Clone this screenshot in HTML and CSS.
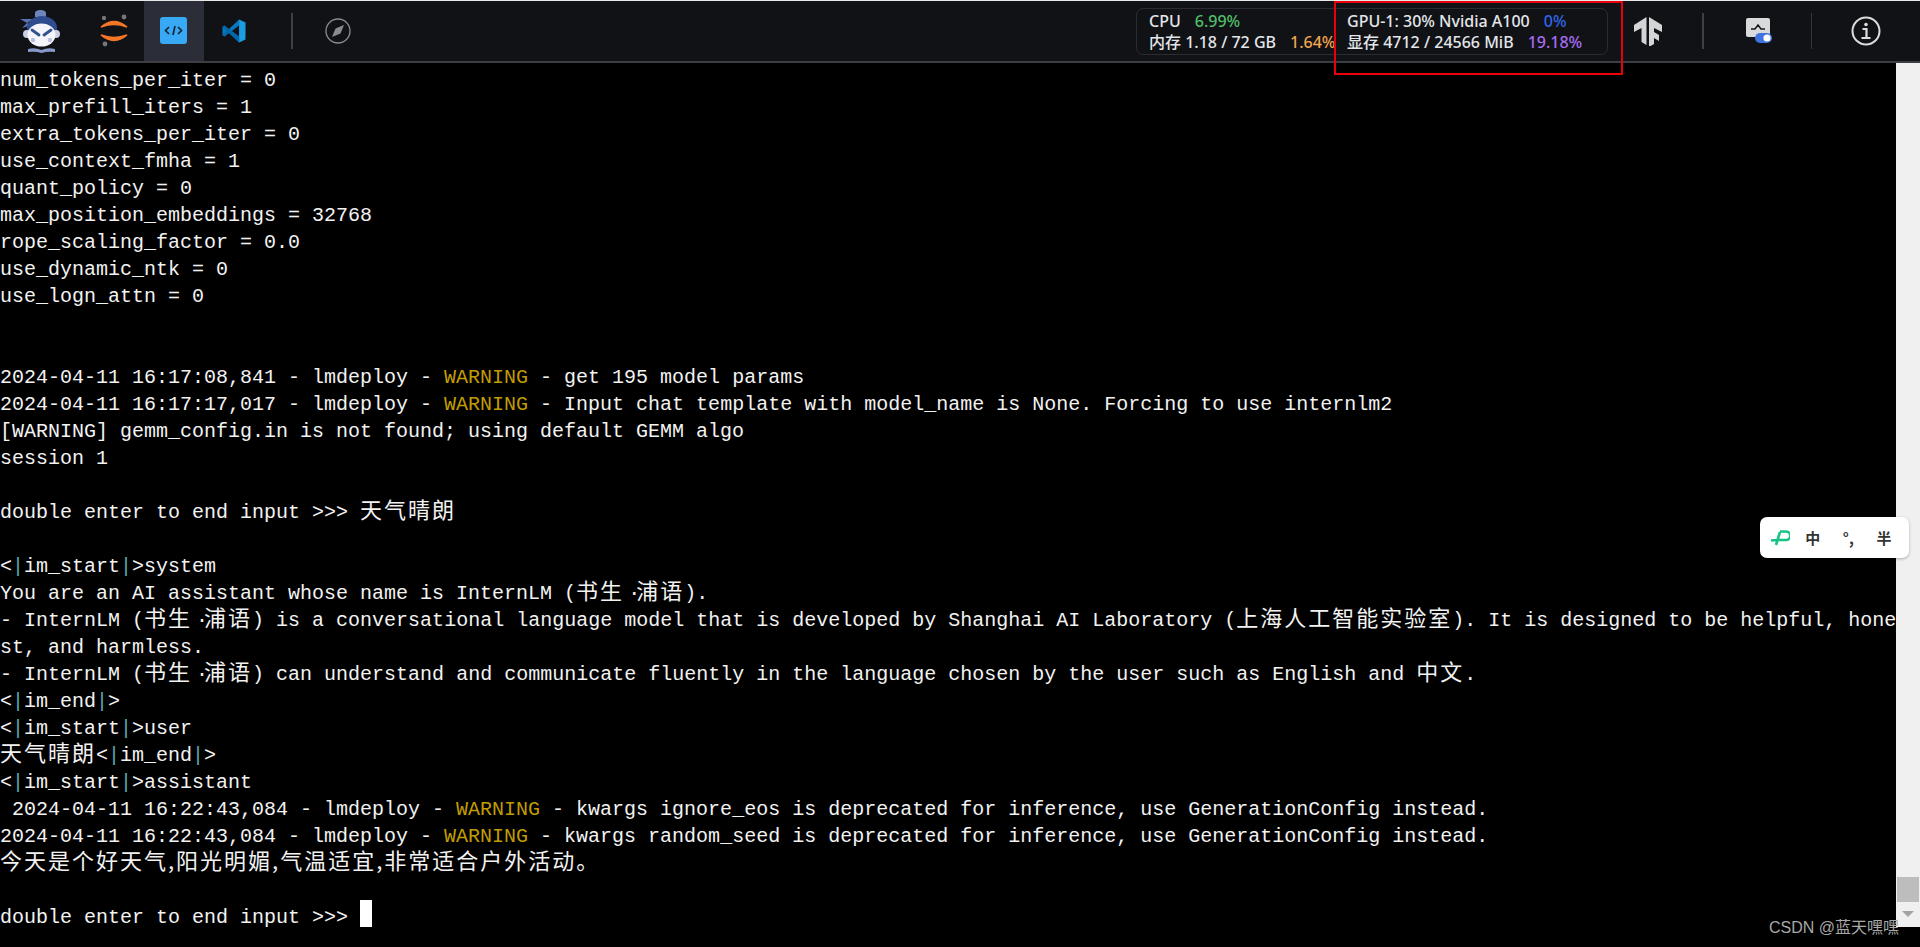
FILE: index.html
```html
<!DOCTYPE html>
<html lang="zh">
<head>
<meta charset="utf-8">
<title>Terminal</title>
<link rel="stylesheet" href="styles.css">
</head>
<body>
<div class="app">
  <header class="topbar">
    <div class="left">
      <div class="logo">
        <svg width="46" height="46" viewBox="0 0 46 46">
          <path d="M17 5c0-4 11-4 11 0v4H17z" fill="#6f86bd"/>
          <path d="M2 11l13 0-6 4 5 2-10 3 5-5z" fill="#5a73b0"/>
          <ellipse cx="24" cy="20" rx="15" ry="12" fill="#2f4c8f"/>
          <circle cx="9" cy="26" r="4" fill="#c6cfe6"/><circle cx="38" cy="26" r="4" fill="#c6cfe6"/>
          <ellipse cx="23.500" cy="27" rx="14" ry="11.500" fill="#f3f5fb"/>
          <path d="M14 22l7 5M33 22l-7 5" stroke="#33508f" stroke-width="2.800" stroke-linecap="round"/>
          <circle cx="15" cy="32" r="2.200" fill="#b7c1de"/><circle cx="32" cy="32" r="2.200" fill="#b7c1de"/>
          <path d="M10 41q7-2 13.500 1q6.500-3 13.500-1v3q-7-1-13.500 1q-6.500-2-13.500-1z" fill="#8698c8"/>
        </svg>
      </div>
      <div class="tab">
        <svg width="32" height="34" viewBox="0 0 32 34">
          <path d="M3 13q13-11 26 0q-13-5-26 0zM3 21q13 11 26 0q-13 5-26 0z" fill="#f37726" stroke="#f37726" stroke-width="1.400"/>
          <circle cx="6" cy="4" r="2.200" fill="#767677"/><circle cx="26" cy="3" r="2.400" fill="#767677"/><circle cx="7" cy="30" r="2.400" fill="#767677"/>
        </svg>
      </div>
      <div class="tab active">
        <svg width="28" height="28" viewBox="0 0 28 28">
          <rect width="27" height="27" rx="3" fill="#38a9f5"/>
          <path d="M9 10l-3.500 3.500 3.500 3.500M18 10l3.500 3.500-3.500 3.500M15 9l-2 9" fill="none" stroke="#14273a" stroke-width="1.700"/>
        </svg>
      </div>
      <div class="tab">
        <svg width="24" height="24" viewBox="0 0 100 100">
          <path d="M71 2l27 13v70l-27 13z" fill="#1b9de2"/>
          <path d="M71 2L29 42 10 27 2 32v36l8 5 19-15 42 40 0-25-30-23 30-23z" fill="#0a75bd"/>
          <path d="M2 32l8-5 61 48v23L29 58 10 73l-8-5 17-18z" fill="#0065a9" opacity=".85"/>
        </svg>
      </div>
      <div class="vline"></div>
      <div class="compass">
        <svg width="26" height="26" viewBox="0 0 26 26">
          <circle cx="13" cy="13" r="12" fill="none" stroke="#8a8b8f" stroke-width="1.300"/>
          <path d="M19 7l-3.500 8.500L7 19l3.500-8.500z" fill="#8a8b8f"/>
        </svg>
      </div>
    </div>
    <div class="right">
      <div class="stats">
        <div class="stat-col">
          <div class="stat-row"><span>CPU</span><span class="green gap">6.99%</span></div>
          <div class="stat-row"><span>内存 1.18 / 72 GB</span><span class="orange gap">1.64%</span></div>
        </div>
        <div class="stat-col">
          <div class="stat-row"><span>GPU-1: 30% Nvidia A100</span><span class="blue gap">0%</span></div>
          <div class="stat-row"><span>显存 4712 / 24566 MiB</span><span class="purple gap">19.18%</span></div>
        </div>
      </div>
      <div class="tf">
        <svg width="28" height="30" viewBox="0 0 28 30">
          <path d="M12.500 1v28l-5-3V12L0 16V9zM15 1l13 8v7l-8-4v4l5 3v6l-5-3v6l-5 3z" fill="#d4d5d7"/>
        </svg>
      </div>
      <div class="vline"></div>
      <div class="monitor">
        <svg width="28" height="28" viewBox="0 0 28 28">
          <rect x="1" y="1" width="24" height="19" rx="2" fill="#d9dadc"/>
          <path d="M6 12h4l3-4 3 4h4" fill="none" stroke="#17181c" stroke-width="1.500"/>
          <rect x="10" y="16" width="17" height="10" rx="5" fill="#3f74e0"/>
          <circle cx="22" cy="21" r="3.600" fill="#fff"/>
        </svg>
      </div>
      <div class="vline dim"></div>
      <div class="info">
        <svg width="30" height="30" viewBox="0 0 30 30">
          <circle cx="15" cy="15" r="13.500" fill="none" stroke="#dcdcde" stroke-width="2"/>
          <circle cx="15" cy="8.500" r="1.800" fill="#dcdcde"/>
          <path d="M11.500 13h4v8.500M10.500 22h9" fill="none" stroke="#dcdcde" stroke-width="2.200"/>
        </svg>
      </div>
    </div>
  </header>
  <main class="terminal">
    <pre class="term-text">num_tokens_per_iter = 0
max_prefill_iters = 1
extra_tokens_per_iter = 0
use_context_fmha = 1
quant_policy = 0
max_position_embeddings = 32768
rope_scaling_factor = 0.0
use_dynamic_ntk = 0
use_logn_attn = 0


2024-04-11 16:17:08,841 - lmdeploy - <span class="warn">WARNING</span> - get 195 model params
2024-04-11 16:17:17,017 - lmdeploy - <span class="warn">WARNING</span> - Input chat template with model_name is None. Forcing to use internlm2
[WARNING] gemm_config.in is not found; using default GEMM algo
session 1

double enter to end input >>> <span class="zh">天气晴朗</span>

&lt;<span class="pipe">|</span>im_start<span class="pipe">|</span>&gt;system
You are an AI assistant whose name is InternLM (<span class="zh">书生</span> <span class="dot">·</span><span class="zh">浦语</span>).
- InternLM (<span class="zh">书生</span> <span class="dot">·</span><span class="zh">浦语</span>) is a conversational language model that is developed by Shanghai AI Laboratory (<span class="zh">上海人工智能实验室</span>). It is designed to be helpful, hone
st, and harmless.
- InternLM (<span class="zh">书生</span> <span class="dot">·</span><span class="zh">浦语</span>) can understand and communicate fluently in the language chosen by the user such as English and <span class="zh">中文</span>.
&lt;<span class="pipe">|</span>im_end<span class="pipe">|</span>&gt;
&lt;<span class="pipe">|</span>im_start<span class="pipe">|</span>&gt;user
<span class="zh">天气晴朗</span>&lt;<span class="pipe">|</span>im_end<span class="pipe">|</span>&gt;
&lt;<span class="pipe">|</span>im_start<span class="pipe">|</span>&gt;assistant
 2024-04-11 16:22:43,084 - lmdeploy - <span class="warn">WARNING</span> - kwargs ignore_eos is deprecated for inference, use GenerationConfig instead.
2024-04-11 16:22:43,084 - lmdeploy - <span class="warn">WARNING</span> - kwargs random_seed is deprecated for inference, use GenerationConfig instead.
<span class="zh">今天是个好天气,阳光明媚,气温适宜,非常适合户外活动。</span>

double enter to end input >>> <span class="cursor"></span></pre>
    <aside class="scrollbar">
      <div class="track"><div class="thumb"></div></div>
      <div class="arrow"></div>
    </aside>
  </main>
  <footer class="bottom"></footer>
</div>
<div class="highlight"></div>
<div class="ime">
  <svg width="20" height="16" viewBox="0 0 20 16"><path d="M6 15L10 2M10 1.500h6a3 3 0 0 1 0 8.500H8q-4 0-7 .5" fill="none" stroke="#17c384" stroke-width="2.600"/></svg>
  <span class="ime-item">中</span>
  <span class="ime-item">°,</span>
  <span class="ime-item">半</span>
</div>
<div class="watermark">CSDN @蓝天嘿嘿</div>
</body>
</html>
```
FILE: styles.css
```css
* { box-sizing: border-box; }
html, body { margin: 0; padding: 0; height: 100%; background: #000; overflow: hidden; }
.app { display: flex; flex-direction: column; height: 947px; }

.topbar {
  height: 63px; flex: none; display: flex; justify-content: space-between;
  background: #111216; border-top: 1px solid #e8e8e8; border-bottom: 2px solid #3d3e42;
}
.left, .right { display: flex; align-items: center; }
.left { height: 60px; }
.logo { width: 84px; padding-left: 18px; display: flex; align-items: center; }
.tab { width: 60px; height: 60px; display: flex; align-items: center; justify-content: center; }
.tab.active { background: #2b2d38; }
.vline { width: 2px; height: 36px; background: #3d404a; margin-left: 27px; }
.compass { margin-left: 32px; display: flex; }

.right { height: 60px; padding-right: 39px; }
.stats {
  width: 472px; height: 47px; margin-right: 26px; padding: 2px 12px;
  display: flex; border: 1px solid #2a2c32; border-radius: 7px;
  font: 500 16px/21px "Noto Sans", "Noto Sans CJK SC", sans-serif; color: #e3e6ea;
}
.stat-col { white-space: nowrap; }
.stat-col:first-child { width: 198px; }
.stat-row { display: flex; height: 21px; }
.gap { margin-left: 14px; }
.green { color: #4fbf67; }
.orange { color: #f0a64e; }
.blue { color: #2f66e8; }
.purple { color: #a66cf0; }

.tf { display: flex; }
.right .vline { margin-left: 40px; }
.monitor { margin-left: 41px; display: flex; }
.right .vline.dim { margin-left: 38px; width: 1px; background: #34363d; }
.info { margin-left: 39px; display: flex; }

.terminal { flex: 1; min-height: 0; display: flex; background: #000; position: relative; }
.term-text {
  flex: 1; min-width: 0; margin: 0; padding-top: 4px; white-space: pre;
  font: 20px/27px "Liberation Mono", "Noto Sans CJK SC", monospace; color: #f2f2f2;
}
.zh {
  font-family: "Noto Sans CJK SC", sans-serif; font-size: 22px; letter-spacing: 2px; line-height: 0;
}
.dot { margin-left: -8px; margin-right: -4px; }
.warn { color: #c19c00; }
.pipe { color: #5ba8b0; }
.cursor { display: inline-block; width: 12px; height: 27px; margin-top: -4px; background: #fff; vertical-align: top; }

.scrollbar { width: 24px; flex: none; background: #f0f0f0; display: flex; flex-direction: column; padding: 0 1px; }
.track { flex: 1; display: flex; flex-direction: column; justify-content: flex-end; padding-bottom: 9px; }
.thumb { height: 25px; background: #bdbdbd; }
.arrow { width: 0; height: 0; margin: 0 auto 10px; border: 6px solid transparent; border-top: 6px solid #a3a3a3; border-bottom: 0; }
.bottom { height: 20px; flex: none; background: #000; }

.highlight { position: absolute; left: 1334px; top: 1px; width: 289px; height: 74px; border: 2px solid #e8000b; pointer-events: none; }
.ime {
  position: absolute; left: 1760px; top: 517px; width: 149px; height: 41px; background: #fff; border-radius: 7px;
  box-shadow: 0 1px 3px rgba(0,0,0,.3); display: flex; align-items: center; padding: 0 12px 0 10px;
  font: 700 15px/1 "Noto Sans CJK SC", sans-serif; color: #333; justify-content: space-between;
}
.ime-item { width: 26px; text-align: center; }
.watermark {
  position: absolute; left: 1769px; top: 916px; font: 16px/24px "Liberation Sans", "Noto Sans CJK SC", sans-serif; color: #a8a8a8; white-space: nowrap;
}
```
